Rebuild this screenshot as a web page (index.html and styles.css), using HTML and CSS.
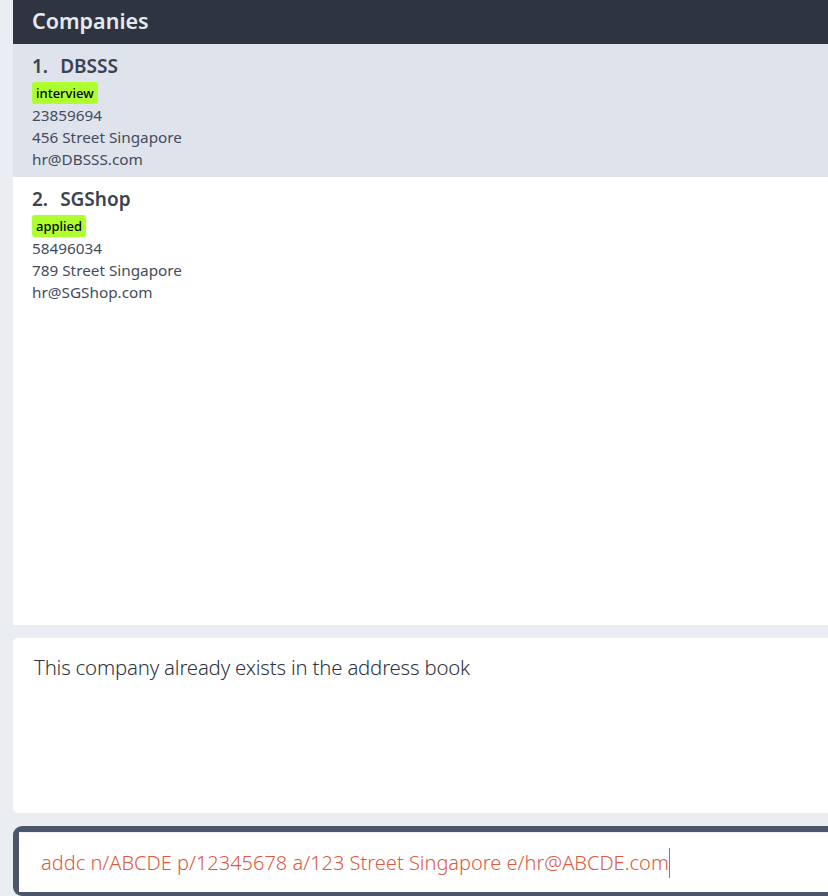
FILE: index.html
```html
<!DOCTYPE html>
<html>
<head>
<meta charset="utf-8">
<link rel="stylesheet" href="styles.css">
</head>
<body>
<div class="app">
  <section class="list-panel">
    <header class="list-header">Companies</header>
    <div class="card selected">
      <div class="card-title"><span class="idx">1.</span><span>DBSSS</span></div>
      <div class="tags"><span class="tag">interview</span></div>
      <div class="line">23859694</div>
      <div class="line">456 Street Singapore</div>
      <div class="line">hr@DBSSS.com</div>
    </div>
    <div class="card">
      <div class="card-title"><span class="idx">2.</span><span>SGShop</span></div>
      <div class="tags"><span class="tag">applied</span></div>
      <div class="line">58496034</div>
      <div class="line">789 Street Singapore</div>
      <div class="line">hr@SGShop.com</div>
    </div>
  </section>
  <section class="result-panel">This company already exists in the address book</section>
  <section class="command-box">
    <div class="command-input"><span class="cmd-text">addc n/ABCDE p/12345678 a/123 Street Singapore e/hr@ABCDE.com</span><span class="caret"></span></div>
  </section>
</div>
</body>
</html>
```
FILE: styles.css
```css
html, body {
  margin: 0;
  padding: 0;
  background: #eaedf2;
  overflow: hidden;
}
.app {
  width: 828px;
  height: 896px;
  padding-left: 13px;
  box-sizing: border-box;
  display: flex;
  flex-direction: column;
  font-family: "Noto Sans", "Open Sans", sans-serif;
}
.list-panel {
  height: 625px;
  background: #ffffff;
  flex: none;
}
.list-header {
  height: 44px;
  background: #2e3440;
  color: #e5e9f0;
  font-size: 21.5px;
  font-weight: 600;
  line-height: 42px;
  padding-left: 19px;
}
.card {
  padding: 10px 19px 7px;
  color: #434c5e;
}
.card.selected {
  background: #dfe3eb;
}
.card-title {
  display: flex;
  gap: 12px;
  font-size: 19px;
  font-weight: 600;
  line-height: 24px;
  color: #3b4252;
}
.tags {
  margin-top: 4px;
  display: flex;
}
.tag {
  background: #adff2f;
  color: #000;
  font-size: 13px;
  line-height: 22px;
  padding: 0 4px;
  border-radius: 3px;
  font-weight: 500;
}
.line {
  font-size: 15.3px;
  line-height: 22px;
}
.result-panel {
  margin-top: 13px;
  height: 175px;
  background: #ffffff;
  border-radius: 5px 0 0 5px;
  padding: 16px 21px;
  box-sizing: border-box;
  font-size: 20.4px;
  font-weight: 300;
  color: #2e3440;
  line-height: 26px;
  letter-spacing: -0.2px;
  flex: none;
}
.command-box {
  margin-top: 13px;
  height: 70px;
  background: #4c566a;
  border-radius: 9px 0 0 9px;
  padding: 6px 0 4px 6px;
  box-sizing: border-box;
  flex: none;
}
.command-input {
  height: 100%;
  background: #ffffff;
  border-top: 1px solid #eef0f3;
  box-sizing: border-box;
  display: flex;
  align-items: center;
  padding-left: 22px;
}
.cmd-text {
  font-size: 20px;
  font-weight: 300;
  color: #de5a40;
  white-space: pre;
}
.caret {
  width: 1px;
  height: 30px;
  background: #de5a40;
}
```
